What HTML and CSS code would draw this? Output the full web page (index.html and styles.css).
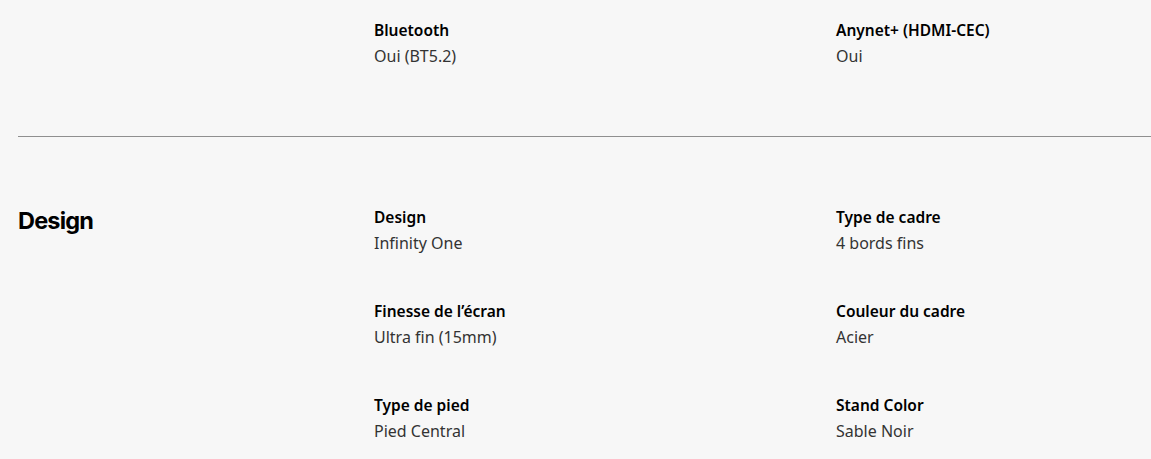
FILE: index.html
```html
<!DOCTYPE html>
<html lang="fr">
<head>
<meta charset="utf-8">
<link rel="stylesheet" href="styles.css">
</head>
<body>
<div class="specs">
  <section class="group group-top">
    <div class="group-title"></div>
    <div class="items">
      <div class="item"><div class="label">Bluetooth</div><div class="value">Oui (BT5.2)</div></div>
      <div class="item"><div class="label">Anynet+ (HDMI-CEC)</div><div class="value">Oui</div></div>
    </div>
  </section>
  <hr class="divider">
  <section class="group group-main">
    <h3 class="group-title">Design</h3>
    <div class="items">
      <div class="item"><div class="label">Design</div><div class="value">Infinity One</div></div>
      <div class="item"><div class="label">Type de cadre</div><div class="value">4 bords fins</div></div>
      <div class="item"><div class="label">Finesse de l’écran</div><div class="value">Ultra fin (15mm)</div></div>
      <div class="item"><div class="label">Couleur du cadre</div><div class="value">Acier</div></div>
      <div class="item"><div class="label">Type de pied</div><div class="value">Pied Central</div></div>
      <div class="item"><div class="label">Stand Color</div><div class="value">Sable Noir</div></div>
    </div>
  </section>
</div>
</body>
</html>
```
FILE: styles.css
```css
html, body {
  margin: 0;
  padding: 0;
  background: #f7f7f7;
}
body {
  font-family: "Noto Sans", "Open Sans", sans-serif;
  color: #000;
}
.specs {
  padding-left: 18px;
}
.group {
  display: flex;
}
.group-top {
  padding-top: 17px;
  padding-bottom: 67px;
}
.group-main {
  padding-top: 67px;
}
.group-title {
  width: 356px;
  flex: none;
  margin: 0;
  padding-top: 2px;
  font-family: "Inter", "Noto Sans", sans-serif;
  font-weight: 700;
  font-size: 23.5px;
  letter-spacing: -0.8px;
  line-height: 30px;
  color: #000;
}
.items {
  display: grid;
  grid-template-columns: 462px 1fr;
  row-gap: 42px;
}
.label {
  font-size: 15.5px;
  font-weight: 600;
  line-height: 26px;
  color: #000;
}
.value {
  font-size: 16px;
  line-height: 26px;
  color: #333;
}
.divider {
  margin: 0;
  border: 0;
  border-top: 1px solid #8f8f8f;
  height: 0;
}
```
